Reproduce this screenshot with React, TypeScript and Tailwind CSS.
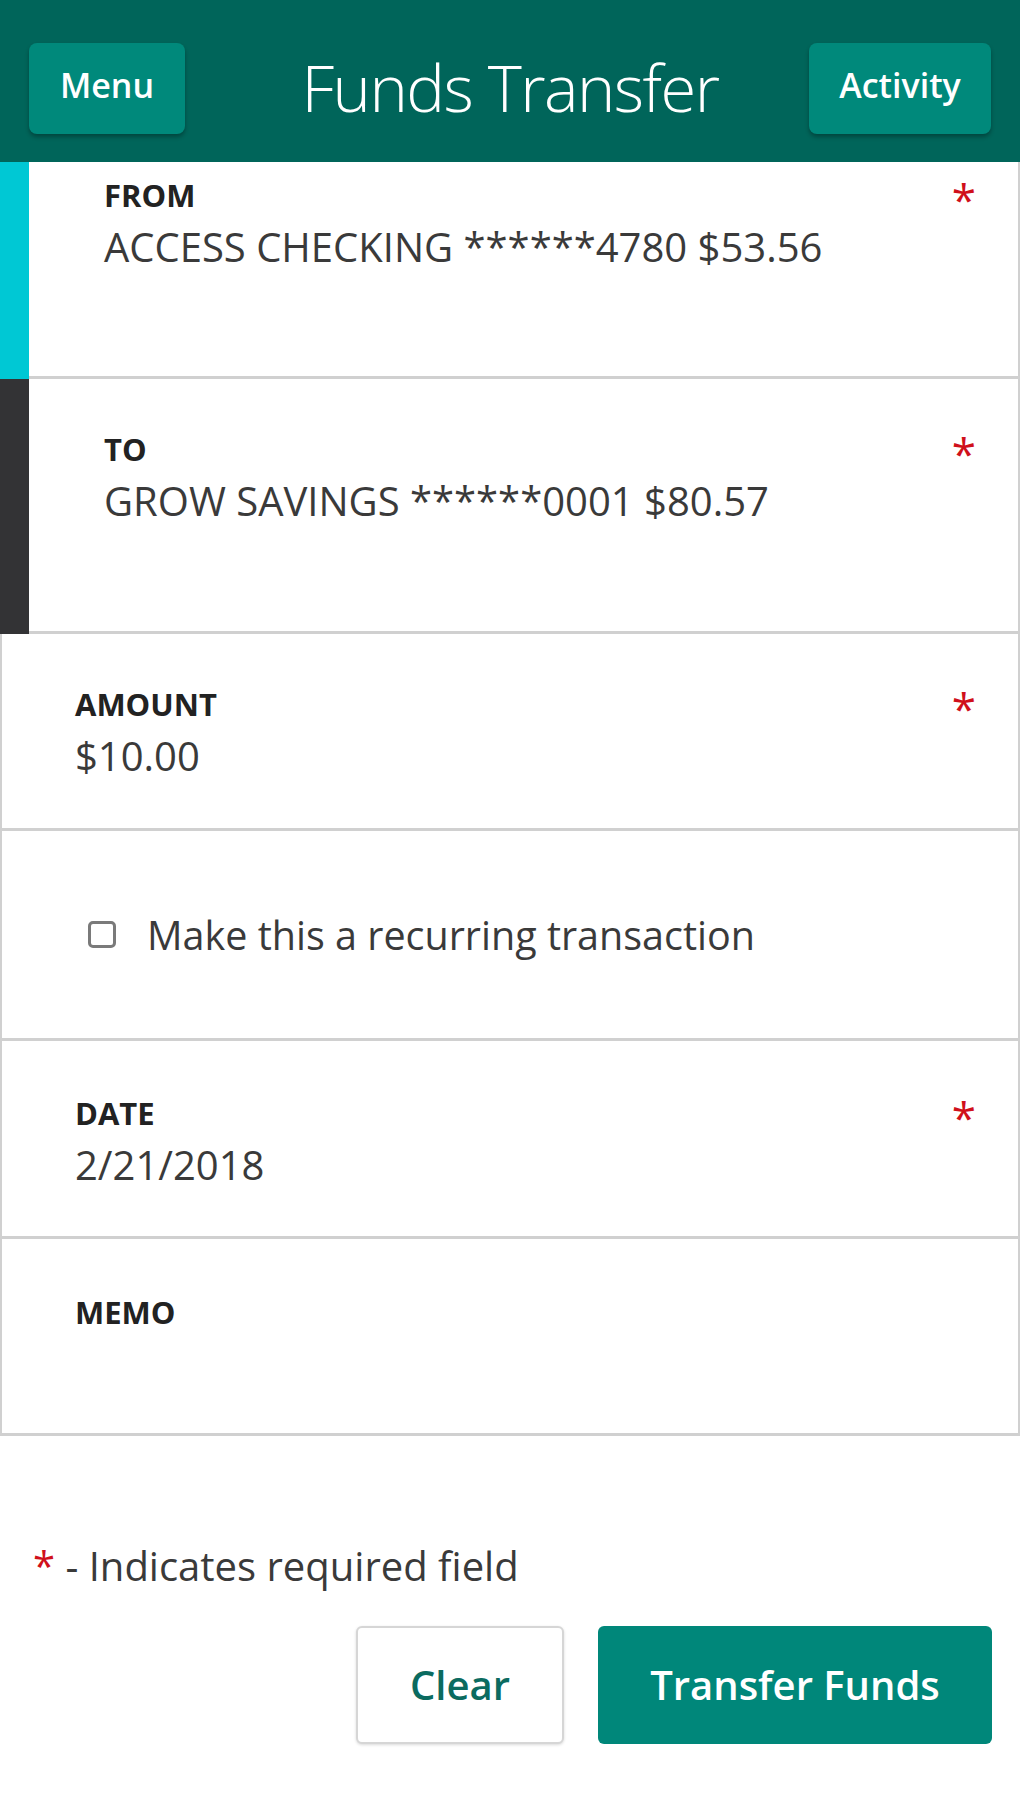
import type { ReactNode } from 'react';

function Asterisk() {
  return <span className="text-[44px] leading-[38px] text-[#d0101b] mt-[4px]">*</span>;
}

function Field({ label, value, required }: { label: string; value?: string; required?: boolean }) {
  return (
    <div>
      <div className="flex items-start justify-between">
        <span className="text-[31px] leading-[38px] font-bold text-[#222]">{label}</span>
        {required && <Asterisk />}
      </div>
      {value && <div className="mt-[5px] text-[40px] leading-[48px] text-[#3a3a3a]">{value}</div>}
    </div>
  );
}

function AccountRow({ bar, height, top, children }: { bar: string; height: string; top: string; children: ReactNode }) {
  return (
    <div className={`flex ${height}`}>
      <div className={`w-[29px] shrink-0 ${bar}`}></div>
      <div className={`flex-1 border-b-[3px] border-r-2 border-[#d0d0d0] pl-[75px] pr-[42px] ${top}`}>{children}</div>
    </div>
  );
}

function Row({ height, children, className = '' }: { height: string; children: ReactNode; className?: string }) {
  return (
    <div className={`${height} border-b-[3px] border-x-2 border-[#d0d0d0] pl-[73px] pr-[42px] ${className}`}>
      {children}
    </div>
  );
}

export default function App() {
  return (
    <div className="min-h-[1813px] w-[1020px] bg-white font-['Open_Sans',sans-serif]">
      <header className="h-[162px] bg-[#00655a] grid grid-cols-[1fr_auto_1fr] items-center px-[29px] pt-[14px]">
        <button className="justify-self-start w-[156px] h-[91px] pb-[6px] rounded-lg bg-[#00897b] shadow-[0_3px_4px_rgba(0,0,0,0.3)] text-white text-[34px] font-semibold">
          Menu
        </button>
        <h1 className="text-white text-[65px] font-light tracking-[-1.5px]">Funds Transfer</h1>
        <button className="justify-self-end w-[182px] h-[91px] pb-[6px] rounded-lg bg-[#00897b] shadow-[0_3px_4px_rgba(0,0,0,0.3)] text-white text-[34px] font-semibold">
          Activity
        </button>
      </header>

      <AccountRow bar="bg-[#00c8d4]" height="h-[217px]" top="pt-[14px]">
        <Field label="FROM" value="ACCESS CHECKING ******4780 $53.56" required />
      </AccountRow>
      <AccountRow bar="bg-[#333335]" height="h-[255px]" top="pt-[51px]">
        <Field label="TO" value="GROW SAVINGS ******0001 $80.57" required />
      </AccountRow>

      <Row height="h-[197px]" className="pt-[51px]">
        <Field label="AMOUNT" value="$10.00" required />
      </Row>
      <Row height="h-[210px]" className="flex items-center pl-[86px]">
        <label className="flex items-center gap-[31px]">
          <span className="w-[28px] h-[27px] rounded-[5px] border-[3px] border-[#7a7a7a] bg-white"></span>
          <span className="text-[39.5px] leading-[48px] text-[#3a3a3a]">Make this a recurring transaction</span>
        </label>
      </Row>
      <Row height="h-[198px]" className="pt-[53px]">
        <Field label="DATE" value="2/21/2018" required />
      </Row>
      <Row height="h-[197px]" className="pt-[54px]">
        <Field label="MEMO" />
      </Row>

      <p className="mt-[106px] pl-[33px] text-[40px] leading-[48px] text-[#3a3a3a]">
        <span className="text-[#d0101b]">*</span> - Indicates required field
      </p>

      <div className="mt-[36px] flex justify-end gap-[34px] pr-[28px]">
        <button className="w-[208px] h-[118px] rounded-md border-2 border-[#d6d6d6] bg-white shadow-[0_1px_3px_rgba(0,0,0,0.15)] text-[40px] font-semibold text-[#0b6b60]">
          Clear
        </button>
        <button className="w-[394px] h-[118px] rounded-md bg-[#00877a] text-[40px] font-semibold text-white">
          Transfer Funds
        </button>
      </div>
    </div>
  );
}
